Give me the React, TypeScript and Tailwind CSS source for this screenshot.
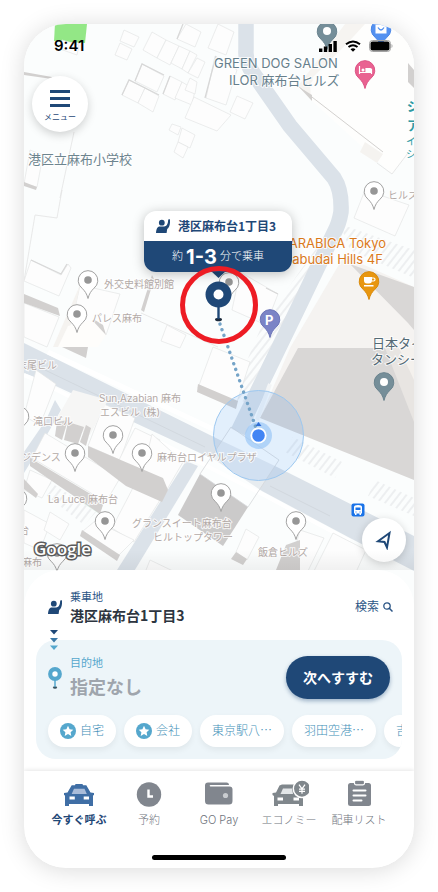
import { useState } from "react";

type Label = { text: string; x: number; y: number; className: string };
type Pin = { x: number; y: number };

const place = "text-[10px] leading-4 text-[#b3aaa7]";
const poi = "text-[13px] leading-4";

// x, y: left edge and vertical middle, from the map's top left corner
const labels: Label[] = [
  { text: "GREEN DOG SALON", x: 190, y: 39, className: `${poi} text-[#66808c]` },
  { text: "ILOR 麻布台ヒルズ", x: 205, y: 56, className: `${poi} text-[#66808c]` },
  { text: "港区立麻布小学校", x: 4, y: 135, className: `${poi} text-[#6d858f]` },
  { text: "ジ", x: 383, y: 82, className: `${poi} font-bold text-[#2f9aa2]` },
  { text: "ア", x: 383, y: 101, className: `${poi} font-bold text-[#2f9aa2]` },
  { text: "イ", x: 382, y: 117, className: "text-[10px] leading-4 text-[#2f9aa2]" },
  { text: "シ", x: 382, y: 130, className: "text-[10px] leading-4 text-[#2f9aa2]" },
  { text: "ヒルズ", x: 364, y: 171, className: place },
  { text: "%ARABICA Tokyo", x: 252, y: 219, className: `${poi} text-[#db7a1b]` },
  { text: "Azabudai Hills 4F", x: 252, y: 235, className: `${poi} text-[#db7a1b]` },
  { text: "日本タイ", x: 348, y: 319, className: `${poi} text-[#546a75]` },
  { text: "タンシー", x: 347, y: 335, className: `${poi} text-[#546a75]` },
  { text: "外交史料館別館", x: 80, y: 260, className: place },
  { text: "パレス麻布", x: 68, y: 294, className: place },
  { text: "末尾ビル", x: -7, y: 341, className: place },
  { text: "Sun,Azabian 麻布", x: 75, y: 374, className: place },
  { text: "エスビル (株)", x: 76, y: 388, className: place },
  { text: "滝口ビル", x: 9, y: 397, className: place },
  { text: "ジデンス", x: -3, y: 433, className: place },
  { text: "麻布台ロイヤルプラザ", x: 133, y: 433, className: place },
  { text: "La Luce 麻布台", x: 24, y: 475, className: place },
  { text: "グランスイート麻布台", x: 108, y: 499, className: place },
  { text: "ヒルトップタワー", x: 129, y: 513, className: place },
  { text: "飯倉ヒルズ", x: 234, y: 528, className: place },
  { text: "台", x: -5, y: 506, className: place },
  { text: "麻布", x: -2, y: 538, className: place },
];

const whitePins: Pin[] = [
  { x: 88, y: 280 },
  { x: 77, y: 314 },
  { x: 113, y: 435 },
  { x: 75, y: 453 },
  { x: 142, y: 453 },
  { x: 105, y: 521 },
  { x: 374, y: 191 },
  { x: 229, y: 282 },
  { x: 221, y: 493 },
  { x: 296, y: 521 },
  { x: 19, y: 416 },
  { x: 17, y: 498 },
  { x: 57, y: 553 },
];

const buildings = [
  "124,30 139,37 134,47 120,41",
  "120,43 132,49 127,60 115,55",
  "152,32 166,40 157,58 143,50",
  "166,40 179,46 170,65 157,58",
  "179,46 190,51 182,69 171,63",
  "190,51 197,55 188,73 182,69",
  "197,58 205,62 198,78 188,73",
  "186,24 201,32 195,47 177,39",
  "142,64 164,76 157,92 135,81",
  "129,80 145,88 138,103 122,95",
  "145,88 159,96 153,112 138,103",
  "170,76 182,82 175,100 163,94",
  "182,82 195,90 192,105 175,98",
  "190,78 197,82 195,94 185,90",
  "194,97 231,115 217,131 185,118",
  "172,124 181,127 178,135 169,130",
  "182,128 195,135 190,148 178,142",
  "178,142 188,147 183,158 174,152",
  "218,24 234,32 226,55 208,48",
  "215,56 237,70 226,105 206,98",
  "237,96 253,103 245,119 230,112",
  "30,150 43,155 37,187 24,184",
  "62,40 79,45 77,55 60,49",
  "31,260 61,275 68,264 71,268 59,296 24,281",
  "24,303 59,317 47,347 24,337",
  "80,285 120,294 106,335 72,322",
  "167,325 186,335 180,348 161,341",
  "213,347 250,362 237,402 198,388",
  "240,272 278,294 266,325 232,310",
  "365,190 409,205 395,236 354,218",
  "36,370 56,384 40,425 24,416",
  "104,404 135,418 120,460 88,446",
  "135,428 160,440 142,474 118,462",
  "152,434 183,462 162,498 140,484",
  "45,433 120,478 106,502 32,458",
  "135,484 160,500 134,542 112,528",
  "95,521 134,540 118,556 83,531",
  "24,510 50,524 40,550 24,543",
  "50,512 69,524 60,540 44,530",
  "246,529 259,537 247,560 236,552",
  "300,530 324,538 306,575 290,568",
  "333,533 366,550 348,590 312,575",
  "150,560 175,572 165,590 142,580",
  "30,470 52,480 42,498 24,490",
];

const shades = [
  "24,294 58,308 60,316 24,303",
  "92,320 106,335 103,325 95,320",
  "62,347 88,347 86,358",
  "24,182 37,187 36,190 24,186",
  "24,72 52,77 52,79 24,75",
  "57,422 68,420 62,440 55,436",
  "68,422 84,427 78,444 64,440",
  "86,425 91,428 86,446 80,442",
  "88,446 163,478 168,490 162,502 126,486 88,457",
  "30,458 104,502 100,514 30,466",
  "82,530 120,555 117,561 80,536",
  "198,384 238,401 236,409 197,392",
  "286,545 300,540 300,580 276,570",
  "236,552 247,559 243,565 231,559",
  "24,479 38,494 36,498 24,489",
  "408,63 414,70 414,88 408,82",
  "152,275 154,279 144,312 141,310",
];

const shortcuts = [
  { text: "自宅", star: true },
  { text: "会社", star: true },
  { text: "東京駅八⋯", star: false },
  { text: "羽田空港⋯", star: false },
  { text: "吉祥寺駅⋯", star: false },
];

function MarkerShape({ x, y, fill, stroke }: Pin & { fill: string; stroke: string }) {
  return (
    <path
      transform={`translate(${x} ${y})`}
      d="M0 18.5C-1.2 13.5-3.2 11-6 8.2A9.8 9.8 0 1 1 6 8.2C3.2 11 1.2 13.5 0 18.5Z"
      fill={fill}
      stroke={stroke}
    />
  );
}

function MapDrawing() {
  return (
    <svg
      className="absolute inset-0 h-full w-full"
      viewBox="24 24 390 580"
      preserveAspectRatio="xMinYMin slice"
      aria-hidden="true"
    >
      <defs>
        <pattern id="hatch" width="6" height="6" patternUnits="userSpaceOnUse" patternTransform="rotate(38)">
          <path d="M1 0v6" stroke="#dfe1e4" />
        </pattern>
      </defs>
      <rect x="24" y="24" width="390" height="580" fill="#fbfdfd" />

      <path d="M55 24h32l-2 19-31-2z" fill="#93e786" />
      <path d="M345 24h22l-54 53-2 20-13-11z" fill="#f6f4f1" />
      <path d="M365 24h49v122l-22 28-81-74-1-16z" fill="#fefefd" />
      <path d="M299 87l84 65" stroke="#d3d1cf" />
      <path d="M299 87l13 8v6z" fill="#d3d1cf" />
      <path d="M365 142l18 12-6 9-17-11z" fill="#f5f3f0" />
      <path d="M377 163l15 11 16-21" fill="none" stroke="#dedede" strokeWidth=".7" />
      <path d="M74 132l-14 66M62 190l-5 28-22-3-11 66M141 313l77 34" fill="none" stroke="#e3e3e3" strokeWidth=".8" />

      {/* roads */}
      <path
        d="M246 20V50Q245 62 253 73L290 126 334 178Q342 190 341 212 339 224 334 233L302 300 238 432"
        fill="none"
        stroke="#dbe2e9"
        strokeWidth="15.5"
        strokeLinejoin="round"
      />
      <path d="M24 343L220 440 277 467 414 536V571L350 538 262 491 215 460 45 381 24 373z" fill="#dbe2e9" />
      <path d="M55 400L61 410 40 447 24 473V452L46 420z" fill="#dbe2e9" />
      <path d="M186 461L198 466 130 578H112z" fill="#dbe2e9" />
      <path d="M24 375L45 384 262 494 350 541" fill="none" stroke="#fff" strokeWidth="4" />
      <path d="M48 352L215 430" stroke="#fff" strokeWidth="5" />
      <path d="M45 370L205 447M270 486L330 516" stroke="#cfd6dc" strokeWidth=".8" />

      {/* hatched lots */}
      <path d="M340 224L414 250V278L350 250z" fill="url(#hatch)" />
      <path d="M322 240L300 290 272 345 244 402 232 396 262 325z" fill="url(#hatch)" />
      <path d="M293 437L342 462 335 478 285 452z" fill="url(#hatch)" />
      <path d="M375 480L414 498V516L368 496z" fill="url(#hatch)" />
      <path d="M50 482L96 512 84 525 46 495z" fill="url(#hatch)" />
      <path d="M60 484L102 508 98 513 84 504z" fill="#e3f3ea" />

      {/* large block on the east side */}
      <path d="M344 256L414 287V422L260 418 290 348z" fill="#f5f3f1" />
      <path d="M350 264L414 287V330L408 323z" fill="#d9d7d6" />
      <path d="M298 348H414V480L260 418z" fill="#d9d7d6" />
      <path d="M385 348H414V422z" fill="#e8e5e2" />
      <path d="M399 348H414V380z" fill="#f4f1ed" />
      <path d="M270 384L257 420" stroke="#f3f5f6" strokeWidth="4" />

      {buildings.map((points) => (
        <polygon key={points} points={points} fill="#fdfdfd" stroke="#e4e5e5" strokeWidth=".7" />
      ))}
      <path d="M72 322l8-37-27 62h7z" fill="#f5f3f0" />
      <path d="M68 326L92 320 106 335 98 347H58z" fill="#fefdfb" />
      <path d="M73 390L108 400 90 435 56 420z" fill="#f6f6f5" />
      <path
        d="M31 260L61 274 67 264M122 95l7-15 30 15M163 94l7-18M135 81l7-17 22 11M205 98l11-42M177 39l6-15M266 288l12 6"
        fill="none"
        stroke="#d8d8d8"
        strokeWidth="1.3"
      />
      {shades.map((points) => (
        <polygon key={points} points={points} fill="#d2d0cf" />
      ))}
      <path d="M200 474L248 507 223 546 178 515z" fill="#cbcaca" />
      <path d="M231 427L279 460 248 507 200 474z" fill="#fff" fillOpacity=".35" stroke="#d6d8da" strokeWidth=".8" />

      {whitePins.map((pin) => (
        <g key={`${pin.x}-${pin.y}`}>
          <MarkerShape x={pin.x} y={pin.y} fill="#fff" stroke="#a2a2a2" />
          <circle cx={pin.x} cy={pin.y} r="3.8" fill="#969696" />
        </g>
      ))}

      <MarkerShape x={327} y={31} fill="#758e99" stroke="#6a838e" />
      <circle cx="327" cy="31" r="4" fill="#fff" />
      <MarkerShape x={384} y={382} fill="#758e99" stroke="#6a838e" />
      <circle cx="384" cy="382" r="4" fill="#fff" />
      <MarkerShape x={381} y={29} fill="#5491f0" stroke="#4a86e6" />
      <path d="M375.5 24.500h11v9h-11z" fill="#fff" />
      <path d="M378 27.500q3 5 6 0" fill="none" stroke="#5491f0" strokeWidth="1.4" />
      <MarkerShape x={365} y={70} fill="#e96291" stroke="#dc5585" />
      <path
        d="M359.5 66v8M360 72.5h12M371.5 69v5M366 71.5v-3h4a1.5 1.5 0 0 1 1.5 1.5v1.5z"
        fill="#fff"
        stroke="#fff"
        strokeWidth="1.2"
      />
      <circle cx="363" cy="70" r="1.5" fill="#fff" />
      <MarkerShape x={369} y={281} fill="#e8960f" stroke="#da8a0a" />
      <path d="M364 277h8v3.5a3 3 0 0 1-3 3h-2a3 3 0 0 1-3-3zM364 285h9.5v1.5H364z" fill="#fff" />
      <path d="M372 278h1.5a1.500 1.500 0 0 1 0 3H372" fill="none" stroke="#fff" strokeWidth="1.2" />
      <MarkerShape x={270} y={319} fill="#7b84c6" stroke="#6c75b8" />

      <rect x="351.5" y="503.5" width="13" height="13" rx="2" fill="#1a73e8" />
      <path
        d="M354 507q0-2 4-2t4 2v6.500h-1v1.500h-1.500v-1.500h-3v1.500H355v-1.500h-1zM355.500 507.500v2.500h5v-2.500zM355.500 511.500v1h1v-1zM359.500 511.500v1h1v-1z"
        fill="#fff"
        fillRule="evenodd"
      />

      {/* current position and the walk to the pick-up point */}
      <circle cx="258.5" cy="435.5" r="45" fill="#3d96f5" fillOpacity=".13" stroke="#9dc8f0" />
      <circle cx="258.5" cy="435.5" r="13.5" fill="#9bc8f7" fillOpacity=".7" />
      <path d="M220 324L256 428" stroke="#75a4c8" strokeWidth="3.4" strokeLinecap="round" strokeDasharray="0.1 5.9" />
      <path d="M255.5 426l3-4 3 4z" fill="#2f6fd8" />
      <circle cx="258.5" cy="435.5" r="7.2" fill="#4285f4" stroke="#fff" strokeWidth="1.8" />

      <path d="M211 271h15l-7.5 7z" fill="#1f4877" />
      <ellipse cx="218.5" cy="319.5" rx="3.5" ry="1.8" fill="#1c2b3c" />
      <path d="M218.5 306v13" stroke="#1f4877" strokeWidth="2.4" />
      <circle cx="218.5" cy="294.5" r="9" fill="#fff" stroke="#1f4877" strokeWidth="8" />
    </svg>
  );
}

function PersonIcon({ className }: { className: string }) {
  return (
    <svg className={className} viewBox="0 0 14 14" fill="currentColor" aria-hidden="true">
      <circle cx="5.8" cy="3.7" r="2.9" />
      <path d="M0 14C.2 10 1.400 7.400 3.800 7.400h4.400C10.600 7.400 12 5.500 12.200.600L14 .200C14.300 5 13.500 8.300 11.200 10L10.600 14z" />
    </svg>
  );
}

function StarBadge() {
  return (
    <svg className="size-4" viewBox="0 0 16 16" aria-hidden="true">
      <circle cx="8" cy="8" r="8" fill="#55a7cd" />
      <path
        d="M8 2.8l1.6 3.4 3.7.5-2.7 2.5.7 3.7L8 11.1l-3.3 1.8.7-3.7-2.700-2.500 3.700-.500z"
        fill="#fff"
      />
    </svg>
  );
}

function CarIcon() {
  return (
    <svg className="h-7 w-8" viewBox="0 0 32 28" aria-hidden="true">
      <path
        d="M12.5 4h7l.5 1.2h3.300l4.200 7.300 3.500.500v2l-1 .500V26h-4v-2H6v2H2V15.500L1 15v-2l3.500-.500L8.700 5.200H12z"
        fill="#3f6ea5"
      />
      <path d="M11 8.800h10.500l2.300 5.200H8.700z" fill="#a9bcd9" />
      <path d="M6.500 16.500h5.300v3H6.500zM20.700 16.500H26v3h-5.300z" fill="#fff" />
    </svg>
  );
}

function ClockIcon() {
  return (
    <svg className="h-7 w-8" viewBox="0 0 32 28" aria-hidden="true">
      <circle cx="16" cy="14.5" r="12.2" fill="#81868e" />
      <path d="M15.5 9.500v7H20" fill="none" stroke="#fff" strokeWidth="2.4" />
    </svg>
  );
}

function WalletIcon() {
  return (
    <svg className="h-7 w-8" viewBox="0 0 32 28" aria-hidden="true">
      <path
        d="M5 2.500h18.500a2.500 2.500 0 0 1 2.500 2.500H7.500a.8.8 0 0 0 0 1.600h19a3 3 0 0 1 3 3v11.400a3.500 3.500 0 0 1-3.500 3.500H5.500A3.500 3.500 0 0 1 2 21V5.500a3 3 0 0 1 3-3z"
        fill="#81868e"
      />
      <circle cx="22.5" cy="15.5" r="2.6" fill="#c9ccd0" />
    </svg>
  );
}

function EconomyIcon() {
  return (
    <svg className="h-7 w-10" viewBox="0 0 40 28" aria-hidden="true">
      <path d="M13 4.500h12l3 8 6 1.500v12h-4v-2H9v2H5V16l-1.500-1v-2L7 12.500l3.500-7z" fill="#80878c" />
      <path d="M14 8.500h9l1 5.500H11.500z" fill="#e3e6e8" />
      <path d="M8.500 17.500h5.500v3H8.500zM24.500 17.500H30v3h-5.500z" fill="#fff" />
      <circle cx="33" cy="8.7" r="8.7" fill="#80878c" stroke="#fff" strokeWidth="1.5" />
      <path
        d="M30 4.700l3 4.200 3-4.200M33 8.700v5M30 9.200h6M30 11.400h6"
        fill="none"
        stroke="#fff"
        strokeWidth="1.2"
      />
    </svg>
  );
}

function ListIcon() {
  return (
    <svg className="h-7 w-8" viewBox="0 0 32 28" aria-hidden="true">
      <rect x="5" y="3" width="23" height="23" rx="2.5" fill="#81868e" />
      <rect x="11.500" y=".2" width="10" height="4.6" rx="1.5" fill="#81868e" stroke="#fff" strokeWidth="1.2" />
      <path d="M10.500 10.500h12M10.500 15.500h12M10.500 20.500h8" stroke="#fff" strokeWidth="2" strokeLinecap="round" />
    </svg>
  );
}

const tabs = [
  { text: "今すぐ呼ぶ", icon: <CarIcon /> },
  { text: "予約", icon: <ClockIcon /> },
  { text: "GO Pay", icon: <WalletIcon /> },
  { text: "エコノミー", icon: <EconomyIcon /> },
  { text: "配車リスト", icon: <ListIcon /> },
];

function StatusBar() {
  return (
    <div className="relative flex items-center justify-between pt-3 pr-[21px] pl-[30px]">
      <span className="text-[15px] leading-5 font-semibold text-black">9:41</span>
      <div className="flex items-center gap-2">
        <svg className="h-3 w-[18px]" viewBox="0 0 18 12" aria-hidden="true">
          <path d="M0 8.500h3.400V12H0zM4.800 6.500h3.400V12H4.800zM9.600 4H13v8H9.600zM14.400 1h3.400v11h-3.400z" />
        </svg>
        <svg className="h-3 w-4" viewBox="0 0 16 12" aria-hidden="true">
          <path d="M1 4.300q7-5.600 14 0M3.500 7q4.500-3.500 9 0" fill="none" stroke="#000" strokeWidth="2" />
          <path d="M5.500 9.300q2.500-2 5 0L8 11.800z" />
        </svg>
        <svg className="h-3 w-6" viewBox="0 0 24 12" aria-hidden="true">
          <rect x=".5" y=".5" width="21" height="11" rx="3" fill="none" stroke="#a3a3a3" />
          <rect x="1.500" y="1.500" width="19" height="9" rx="2" />
          <path d="M22.500 4v4q1-.500 1-2t-1-2z" fill="#a3a3a3" />
        </svg>
      </div>
    </div>
  );
}

function MapView() {
  return (
    <section className="relative h-[580px] overflow-hidden" aria-label="地図">
      <MapDrawing />
      {labels.map((label) => (
        <span
          key={label.text + label.y}
          className={`absolute -translate-y-1/2 whitespace-nowrap ${label.className} [paint-order:stroke] [-webkit-text-stroke:2px_#ffffffcc]`}
          style={{ left: label.x, top: label.y }}
        >
          {label.text}
        </span>
      ))}
      <span className="absolute top-[286px] left-[241px] text-[13px] leading-5 font-bold text-white">P</span>
      <span className="absolute top-[509px] left-[10px] font-['Open_Sans'] text-[17px] leading-8 font-semibold text-white [paint-order:stroke] [-webkit-text-stroke:3px_#5c5c5c]">
        Google
      </span>

      <StatusBar />

      <button className="absolute top-[52px] left-2 flex size-14 flex-col items-center rounded-full bg-white pt-[14px] shadow-[0_3px_10px_#0000002e]">
        <span className="flex flex-col gap-1">
          <span className="h-[3px] w-5 bg-[#1f4877]" />
          <span className="h-[3px] w-5 bg-[#1f4877]" />
          <span className="h-[3px] w-5 bg-[#1f4877]" />
        </span>
        <span className="mt-1 text-[8px] leading-3 text-[#1f4877]">メニュー</span>
      </button>

      <div className="absolute top-[187px] left-[120px] w-[148px] overflow-hidden rounded-xl bg-white shadow-[0_2px_12px_#00000040]">
        <div className="flex h-[30px] items-center gap-2 pl-3 text-[#1f4877]">
          <PersonIcon className="size-[14px]" />
          <span className="font-['Noto_Sans_CJK_JP',sans-serif] text-[12px] leading-4 font-bold whitespace-nowrap">
            港区麻布台1丁目3
          </span>
        </div>
        <div className="flex h-[31px] items-center justify-center gap-[3px] bg-[#1f4877] text-[11px] font-light whitespace-nowrap text-white">
          約<strong className="text-[20px] leading-6 font-bold">1-3</strong>分で乗車
        </div>
      </div>

      <div className="absolute top-[242px] left-[156px] size-[78px] rounded-full border-[5px] border-[#ed1c24]" />

      <button
        aria-label="現在地"
        className="absolute top-[494px] right-2 flex size-11 items-center justify-center rounded-full bg-white shadow-[0_2px_8px_#0000002e]"
      >
        <svg className="size-5" viewBox="0 0 20 20" aria-hidden="true">
          <path d="M15.500 3L4 11.200l6.500.800 2.500 5.500z" fill="none" stroke="#1f4877" strokeWidth="2" />
        </svg>
      </button>
      <div className="absolute inset-x-0 bottom-[34px] h-5 bg-linear-to-t from-black/5 to-transparent" />
    </section>
  );
}

export default function App() {
  const [active, setActive] = useState(0);

  return (
    <div className="min-h-screen bg-white p-6 font-['Inter','Noto_Sans_CJK_JP',sans-serif]">
      <main className="mx-auto max-w-[430px] overflow-hidden rounded-[42px] bg-white shadow-[0_2px_24px_#00000026]">
        <MapView />

        <div className="relative -mt-[34px] rounded-t-[36px] bg-white px-3 pt-[19px] pb-3">
          <div className="flex items-center justify-between pr-[9px] pl-3">
            <div className="flex items-center gap-2">
              <PersonIcon className="size-[14px] text-[#1f4877]" />
              <div>
                <p className="text-[11px] leading-4 text-[#2b5585]">乗車地</p>
                <p className="font-['Noto_Sans_CJK_JP',sans-serif] text-[14px] leading-5 font-bold text-[#2d3540]">
                  港区麻布台1丁目3
                </p>
              </div>
            </div>
            <button className="flex items-center gap-1 text-[12px] leading-4 text-[#2b5585]">
              検索
              <svg className="size-[10px]" viewBox="0 0 10 10" fill="none" stroke="currentColor" aria-hidden="true">
                <circle cx="4" cy="4" r="3.2" strokeWidth="1.3" />
                <path d="M6.300 6.300L9.500 9.500" strokeWidth="1.5" />
              </svg>
            </button>
          </div>

          <svg className="absolute top-[60px] left-[26px] z-10 h-5 w-2" viewBox="0 0 8 20" aria-hidden="true">
            <path d="M0 0h8L4 4.500z" fill="#1f4877" />
            <path d="M0 8h8l-4 4.500z" fill="#3b78a6" />
            <path d="M0 15.500h8L4 20z" fill="#55a7cd" />
          </svg>

          <div className="relative mt-[15px] overflow-hidden rounded-[20px] bg-[#edf5f9] pt-[15px] pb-3 pl-3">
            <div className="flex items-center justify-between pr-3">
              <div className="flex items-center gap-2">
                <svg className="h-6 w-[14px]" viewBox="0 0 14 24" aria-hidden="true">
                  <ellipse cx="7" cy="21.5" rx="2" ry="1.2" fill="#39525f" />
                  <path d="M7 13v8" stroke="#55a7cd" strokeWidth="1.5" />
                  <circle cx="7" cy="8" r="4.8" fill="#fff" stroke="#55a7cd" strokeWidth="4.2" />
                </svg>
                <div>
                  <p className="text-[11px] leading-4 text-[#55a7cd]">目的地</p>
                  <p className="mt-[5px] text-[18px] leading-6 font-bold text-[#9fa5ad]">指定なし</p>
                </div>
              </div>
              <button className="h-[43px] w-[104px] rounded-full bg-[#1f4877] text-[14px] font-bold whitespace-nowrap text-white shadow-[0_2px_4px_#1f487766]">
                次へすすむ
              </button>
            </div>
            <div className="mt-[15px] flex gap-2">
              {shortcuts.map((item) => (
                <button
                  key={item.text}
                  className="flex h-8 shrink-0 items-center gap-1 rounded-full bg-white px-3 text-[12px] font-light whitespace-nowrap text-[#3f8fb8] shadow-[0_3px_6px_#0000000f]"
                >
                  {item.star && <StarBadge />}
                  {item.text}
                </button>
              ))}
            </div>
          </div>
        </div>

        <nav className="relative bg-white px-5 pt-[9px] pb-2 shadow-[0_-1px_4px_#0000001a]">
          <ul className="grid grid-cols-5">
            {tabs.map((tab, i) => (
              <li key={tab.text}>
                <button
                  onClick={() => setActive(i)}
                  className={`flex w-full flex-col items-center gap-1 text-[11px] leading-4 whitespace-nowrap ${
                    active === i ? "font-bold text-[#1f4877]" : "font-light text-[#70757d]"
                  }`}
                >
                  {tab.icon}
                  {tab.text}
                </button>
              </li>
            ))}
          </ul>
          <div className="mx-auto mt-[27px] h-[5px] w-[134px] rounded-full bg-black" />
        </nav>
      </main>
    </div>
  );
}
